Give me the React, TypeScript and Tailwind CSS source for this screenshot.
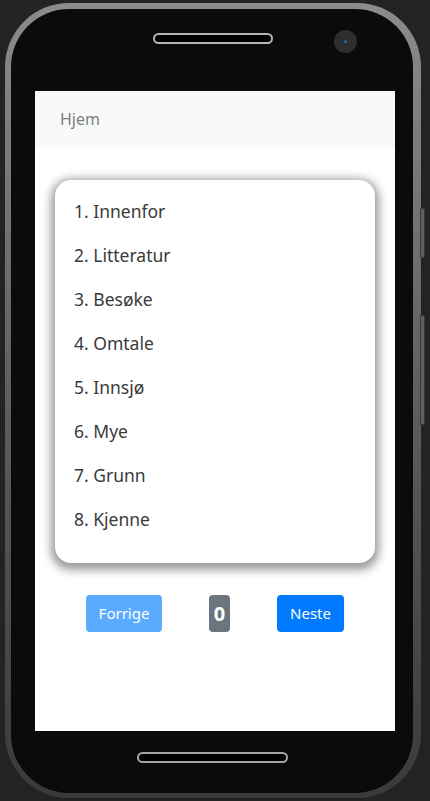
import React from 'react';

const words = ['Innenfor', 'Litteratur', 'Besøke', 'Omtale', 'Innsjø', 'Mye', 'Grunn', 'Kjenne'];

const font = { fontFamily: '"Noto Sans", "Open Sans", sans-serif' };

export default function App() {
  return (
    <div className="w-[430px] h-[801px] bg-[#232323] overflow-hidden pt-[3px] pl-[5px]" style={font}>
      {/* phone frame */}
      <div className="relative w-[416px] h-[795px] rounded-[64px] bg-gradient-to-b from-[#8c8c8c] via-[#5e5e5e] to-[#3a3a3a] p-[6px] pr-[8px] pb-[5px]">
        {/* side buttons */}
        <div className="absolute right-[-4px] top-[205px] w-[5px] h-[50px] rounded-r-[2px] bg-[#5f5f63] border border-[#3a3a3a]" />
        <div className="absolute right-[-4px] top-[312px] w-[5px] h-[110px] rounded-r-[2px] bg-[#5f5f63] border border-[#3a3a3a]" />

        <div className="w-full h-full rounded-[58px] bg-[#0b0b0b] flex flex-col pl-[24px] pr-[18px]">
          {/* top bezel */}
          <div className="relative h-[82px] shrink-0">
            <div className="absolute left-[118px] top-[24px] w-[120px] h-[11px] rounded-full border-2 border-[#b5b5b5] bg-black" />
            <div className="absolute left-[299px] top-[21px] w-[23px] h-[23px] rounded-full bg-[#2e2e2e] flex items-center justify-center">
              <div className="w-[3px] h-[3px] rounded-full bg-[#1e6fa8]" />
            </div>
          </div>

          {/* screen */}
          <div className="w-[360px] h-[640px] bg-white shrink-0 flex flex-col">
            <nav className="h-[56px] bg-[#f8f9fa] flex items-center px-[25px]">
              <span className="text-[16px] text-[#7f7f7f]">Hjem</span>
            </nav>

            <div className="mt-[33px] mx-[20px] rounded-[16px] bg-white shadow-[0_3px_10px_4px_rgba(0,0,0,0.4)] pt-[9px] pb-[22px] px-[19px]">
              {words.map((w, i) => (
                <div key={w} className="h-[44px] flex items-center text-[17.5px] text-[#3a3a3a]">
                  {i + 1}. {w}
                </div>
              ))}
            </div>

            <div className="mt-[32px] flex justify-center items-center gap-[47px]">
              <button className="w-[76px] h-[37px] rounded-[4px] bg-[#5aabff] text-white text-[15px]">Forrige</button>
              <span className="w-[21px] h-[37px] rounded-[4px] bg-[#6c757d] text-white text-[20px] font-bold flex items-center justify-center">0</span>
              <button className="w-[67px] h-[37px] rounded-[4px] bg-[#007bff] text-white text-[15px]">Neste</button>
            </div>
          </div>

          {/* bottom bezel */}
          <div className="flex-1 relative">
            <div className="absolute left-[102px] top-[21px] w-[151px] h-[11px] rounded-full border-2 border-[#a5a5a5] bg-black" />
          </div>
        </div>
      </div>
    </div>
  );
}
